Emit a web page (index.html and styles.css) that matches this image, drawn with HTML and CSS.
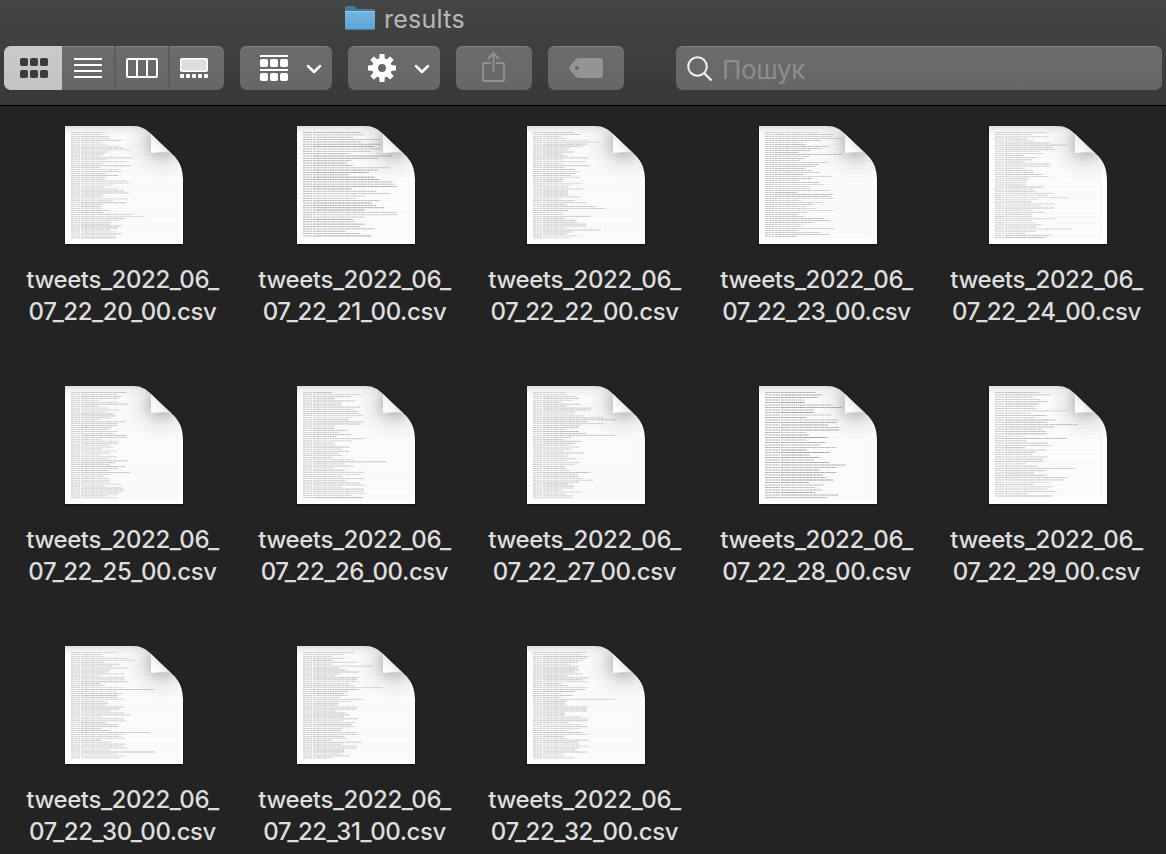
FILE: index.html
```html
<!DOCTYPE html>
<html lang="uk">
<head>
<meta charset="utf-8">
<title>results</title>
<link rel="stylesheet" href="styles.css">
</head>
<body>
<svg class="defs" width="0" height="0" aria-hidden="true">
  <defs>
    <linearGradient id="folder" x1="0" y1="0" x2="0" y2="1"><stop offset="0" stop-color="#73b6df"/><stop offset="1" stop-color="#5ba5d1"/></linearGradient>
    <linearGradient id="top" x1="0" y1="0" x2="0" y2="1"><stop offset="0" stop-color="#999" stop-opacity=".3"/><stop offset="1" stop-color="#fff" stop-opacity="0"/></linearGradient>
    <radialGradient id="bend" gradientUnits="userSpaceOnUse" cx="97" cy="17" r="38"><stop offset="0" stop-color="#777" stop-opacity=".65"/><stop offset=".3" stop-color="#888" stop-opacity=".42"/><stop offset=".6" stop-color="#aaa" stop-opacity=".17"/><stop offset="1" stop-color="#ccc" stop-opacity="0"/></radialGradient>
    <linearGradient id="curl" gradientUnits="userSpaceOnUse" x1="86" y1="27" x2="98" y2="16"><stop offset="0" stop-color="#fff"/><stop offset=".6" stop-color="#f6f6f6"/><stop offset="1" stop-color="#dedede"/></linearGradient>
    <clipPath id="sheet"><path d="M0 0H68C76 0 81 3 86 8L107 28C114 34 118 42 118 54V118H0Z"/></clipPath>
  </defs>
</svg>
<header class="toolbar">
  <div class="title">
    <svg width="30" height="24" viewBox="0 0 30 24"><path d="M0 5V2Q0 0 2 0H8.500Q10 0 11 1.500L12 3H28Q30 3 30 5V8H0Z" fill="#437a9d"/><path d="M0 5H30V22Q30 24 28 24H2Q0 24 0 22Z" fill="url(#folder)"/><path d="M0 5.500H30" stroke="#8fc8e8"/><path d="M1 23.500H29" stroke="#447fa5"/></svg>
    <span>results</span>
  </div>
  <div class="controls">
    <div class="segments">
      <div class="segment selected"><svg width="28" height="20" viewBox="0 0 28 20" fill="#3b3b3b"><rect width="8" height="8" rx="1.800"/><rect x="10" width="8" height="8" rx="1.800"/><rect x="20" width="8" height="8" rx="1.800"/><rect y="12" width="8" height="8" rx="1.800"/><rect x="10" y="12" width="8" height="8" rx="1.800"/><rect x="20" y="12" width="8" height="8" rx="1.800"/></svg></div>
      <div class="segment"><svg width="28" height="20" viewBox="0 0 28 20"><path d="M0 1H28M0 7H28M0 13H28M0 19H28" stroke="#fff" stroke-width="2"/></svg></div>
      <div class="segment"><svg width="32" height="20" viewBox="0 0 32 20" fill="none" stroke="#fff" stroke-width="2"><rect x="1" y="1" width="30" height="18" rx="1"/><path d="M11 1V19M21 1V19"/></svg></div>
      <div class="segment last"><svg width="28" height="20" viewBox="0 0 28 20"><rect x=".75" y=".75" width="26.500" height="12.500" rx="1" fill="#dedede" stroke="#fff" stroke-width="1.500"/><g fill="#fff"><rect y="16" width="4" height="4" rx="1"/><rect x="6" y="16" width="4" height="4" rx="1"/><rect x="12" y="16" width="4" height="4" rx="1"/><rect x="18" y="16" width="4" height="4" rx="1"/><rect x="24" y="16" width="4" height="4" rx="1"/></g></svg></div>
    </div>
    <div class="button menu">
      <svg width="28" height="26" viewBox="0 0 28 26" fill="#fff"><path d="M0 0H28V2H0ZM0 14H28V16H0Z"/><rect y="4" width="8" height="8" rx="1.800"/><rect x="10" y="4" width="8" height="8" rx="1.800"/><rect x="20" y="4" width="8" height="8" rx="1.800"/><rect y="18" width="8" height="8" rx="1.800"/><rect x="10" y="18" width="8" height="8" rx="1.800"/><rect x="20" y="18" width="8" height="8" rx="1.800"/></svg>
      <svg class="chevron" width="16" height="10" viewBox="0 0 16 10"><path d="M2 2L8 8L14 2"/></svg>
    </div>
    <div class="button menu">
      <svg width="28" height="28" viewBox="-14 -14 28 28"><g fill="#fff"><path id="tooth" d="M-2.900 -8L-2.500 -13.500Q-2.400 -14 -2 -14H2Q2.400 -14 2.500 -13.500L2.900 -8V8L2.500 13.500Q2.400 14 2 14H-2Q-2.400 14 -2.500 13.500L-2.900 8Z"/><use href="#tooth" transform="rotate(45)"/><use href="#tooth" transform="rotate(90)"/><use href="#tooth" transform="rotate(135)"/><circle r="10"/></g><circle r="4" fill="#696969"/></svg>
      <svg class="chevron" width="16" height="10" viewBox="0 0 16 10"><path d="M2 2L8 8L14 2"/></svg>
    </div>
    <div class="button action"><svg class="share" width="24" height="32" viewBox="0 0 24 32" fill="none" stroke="#919191" stroke-width="1.900"><path d="M9 12H2Q1 12 1 13V29Q1 30 2 30H21Q22 30 22 29V13Q22 12 21 12H14M11.500 20.500V2M6 8L11.500 2L17 8"/></svg></div>
    <div class="button action"><svg width="34" height="20" viewBox="0 0 34 20"><path fill-rule="evenodd" d="M10 0H31Q34 0 34 3V17Q34 20 31 20H10Q8 20 6 18L1 12Q-.7 10 1 8L6 2Q8 0 10 0ZM8 8A2 2 0 1 0 8 12A2 2 0 1 0 8 8" fill="#949494"/></svg></div>
    <div class="search"><svg width="26" height="26" viewBox="0 0 26 26" fill="none" stroke="#f2f2f2" stroke-width="2"><circle cx="10.500" cy="10.500" r="9.300"/><path d="M17 17L24.500 24.500" stroke-width="2.300"/></svg><span>Пошук</span></div>
  </div>
</header>
<main class="files">
  <div class="file"><span>tweets_2022_06_</span><span>07_22_20_00.csv</span></div>
  <div class="file"><span>tweets_2022_06_</span><span>07_22_21_00.csv</span></div>
  <div class="file"><span>tweets_2022_06_</span><span>07_22_22_00.csv</span></div>
  <div class="file"><span>tweets_2022_06_</span><span>07_22_23_00.csv</span></div>
  <div class="file"><span>tweets_2022_06_</span><span>07_22_24_00.csv</span></div>
  <div class="file"><span>tweets_2022_06_</span><span>07_22_25_00.csv</span></div>
  <div class="file"><span>tweets_2022_06_</span><span>07_22_26_00.csv</span></div>
  <div class="file"><span>tweets_2022_06_</span><span>07_22_27_00.csv</span></div>
  <div class="file"><span>tweets_2022_06_</span><span>07_22_28_00.csv</span></div>
  <div class="file"><span>tweets_2022_06_</span><span>07_22_29_00.csv</span></div>
  <div class="file"><span>tweets_2022_06_</span><span>07_22_30_00.csv</span></div>
  <div class="file"><span>tweets_2022_06_</span><span>07_22_31_00.csv</span></div>
  <div class="file"><span>tweets_2022_06_</span><span>07_22_32_00.csv</span></div>
</main>
<script src="preview.js"></script>
</body>
</html>
```
FILE: styles.css
```css
* { box-sizing: border-box; }
body { margin: 0; background: #232323; font-family: Inter, "Noto Sans", sans-serif; }
svg { display: block; flex: none; }
.defs { position: absolute; }
.toolbar { height: 106px; padding-top: 1px; background: linear-gradient(#454545, #383838); border-bottom: 1px solid #000; }
.title { display: flex; height: 34px; align-items: center; padding-left: 345px; gap: 9px; color: #b8b8b8; font-size: 25px; }
.title span { letter-spacing: .25px; margin-top: 2px; }
.controls { display: flex; gap: 16px; margin-top: 11px; padding-left: 4px; }
.segments, .button, .search { height: 44px; border-radius: 7px; background: linear-gradient(#6c6c6c, #666); box-shadow: inset 0 1px #808080; display: flex; align-items: center; }
.segments { width: 220px; overflow: hidden; }
.segment { width: 54px; height: 44px; display: flex; align-items: center; justify-content: center; border-right: 2px solid #5c5c5c; }
.segment.selected { width: 58px; border: 0; background: linear-gradient(#cbcbcb, #c3c3c3); padding-left: 2px; }
.segment.last { border: 0; padding-right: 6px; }
.menu { width: 92px; padding-left: 20px; gap: 18px; }
.chevron { margin-top: 1px; }
.chevron path { fill: none; stroke: #fff; stroke-width: 2.5; stroke-linecap: round; stroke-linejoin: round; }
.action { width: 76px; justify-content: center; }
.share { margin-top: -3px; }
.search { width: 486px; margin-left: 36px; padding-left: 11px; gap: 9px; color: #8e8e8e; font-size: 26px; letter-spacing: -.3px; }
.search svg { margin-top: 2px; }
.search span { margin-top: 2px; }
.files { display: grid; grid-template-columns: 232px 230px 232px 230px 200px; row-gap: 58px; padding: 20px 0 0 24px; }
.file { width: 200px; display: flex; flex-direction: column; align-items: center; color: #dedede; font-size: 24px; line-height: 32px; font-weight: 500; letter-spacing: -.42px; }
.preview { margin-bottom: 20px; overflow: visible; filter: drop-shadow(0 1px 1px #0008); }
.file span { margin-right: 3px; white-space: nowrap; }
```
FILE: preview.js
```javascript
// Draws a miniature page of rows for every file.
const styles = [[1.95,.42,42],[2.35,.62,70],[1.95,.42,38],[2,.44,48],[2.1,.42,40],[1.95,.42,40],[2.1,.46,42],[1.95,.42,40],[2.5,.66,50],[2.3,.48,42],[1.95,.42,40],[1.95,.45,40],[1.95,.42,38]];
document.querySelectorAll('.file').forEach((file, index) => {
  let seed = 731 + index * 997;
  const random = () => (seed = seed * 16807 % 2147483647) / 2147483647;
  random();
  const [pitch, ink, length] = styles[index];
  const start = pitch > 2.4 ? 22 : 16;
  let rows = '';
  for (let y = 6.5; y < 112; y += pitch) {
    const end = Math.min(start + length * (.45 + random() * .8) + (random() > .93 ? 25 : 0), y < 28 ? 84 : 110);
    const shade = ink * (.5 + random() * .4);
    rows += `<path d="M6 ${y}H112" stroke="#ddd" stroke-width=".4" opacity=".5"/><path d="M6 ${y}H${start - 1}" stroke="#555" opacity="${ink * .8}" stroke-width=".8" stroke-dasharray="3 .4"/><path d="M${start} ${y}H${end}" stroke="#444" opacity="${shade}" stroke-width=".9" stroke-dasharray="2 .3 1.300 .25 3 .4"/>`;
    if (random() > .97) rows += `<circle cx="${end}" cy="${y}" r=".6" fill="#e4b557" opacity=".7"/>`;
  }
  const page = 'M0 0H68C76 0 81 3 86 8L107 28C114 34 118 42 118 54V118H0Z';
  file.insertAdjacentHTML('afterbegin', `<svg class="preview" width="118" height="118" viewBox="0 0 118 118"><path d="${page}" fill="#fdfdfd"/><g clip-path="url(#sheet)">${rows}<path d="M112 38V112" stroke="#eee" stroke-width=".5"/><path d="M0 0H90V13H0Z" fill="url(#top)"/></g><path d="${page}" fill="url(#bend)"/><path d="M86 8L107 28C102 25 95 27 86 27Z" fill="url(#curl)"/></svg>`);
});
```
